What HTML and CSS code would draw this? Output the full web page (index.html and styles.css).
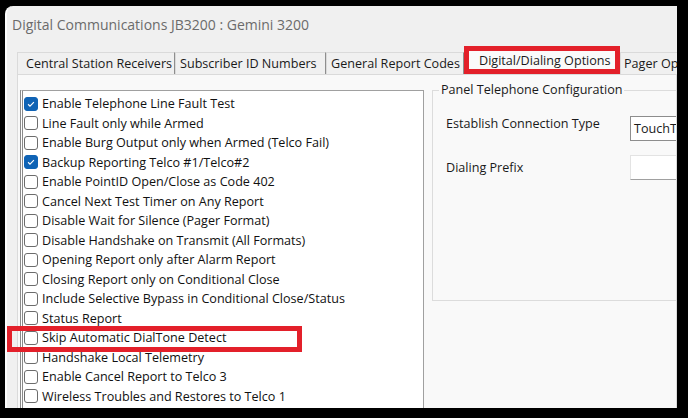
FILE: index.html
```html
<!DOCTYPE html>
<html lang="en">
<head>
    <meta charset="UTF-8">
    <meta name="viewport" content="width=device-width, initial-scale=1.0">
    <title>Digital Communications JB3200 : Gemini 3200</title>
    <link rel="stylesheet" href="styles.css">
</head>
<body>
    <div class="frame">
        <div class="window">
            <div class="titlebar">Digital Communications JB3200 : Gemini 3200</div>

            <div class="tabs">
                <div class="tab receivers">Central Station Receivers</div>
                <div class="tab subscriber">Subscriber ID Numbers</div>
                <div class="tab codes">General Report Codes</div>
                <div class="tab dialing active">Digital/Dialing Options</div>
                <div class="tab pager">Pager Options</div>
            </div>

            <div class="panel">
                <ul class="checklist">
                    <li><span class="box checked"><svg viewBox="0 0 14 14"><path d="M3.6 7.3l2.2 2.2 4.6-4.8"/></svg></span>Enable Telephone Line Fault Test</li>
                    <li><span class="box"></span>Line Fault only while Armed</li>
                    <li><span class="box"></span>Enable Burg Output only when Armed (Telco Fail)</li>
                    <li><span class="box checked"><svg viewBox="0 0 14 14"><path d="M3.6 7.3l2.2 2.2 4.6-4.8"/></svg></span>Backup Reporting Telco #1/Telco#2</li>
                    <li><span class="box"></span>Enable PointID Open/Close as Code 402</li>
                    <li><span class="box"></span>Cancel Next Test Timer on Any Report</li>
                    <li><span class="box"></span>Disable Wait for Silence (Pager Format)</li>
                    <li><span class="box"></span>Disable Handshake on Transmit (All Formats)</li>
                    <li><span class="box"></span>Opening Report only after Alarm Report</li>
                    <li><span class="box"></span>Closing Report only on Conditional Close</li>
                    <li><span class="box"></span>Include Selective Bypass in Conditional Close/Status</li>
                    <li><span class="box"></span>Status Report</li>
                    <li><span class="box"></span>Skip Automatic DialTone Detect</li>
                    <li><span class="box"></span>Handshake Local Telemetry</li>
                    <li><span class="box"></span>Enable Cancel Report to Telco 3</li>
                    <li><span class="box"></span>Wireless Troubles and Restores to Telco 1</li>
                </ul>

                <fieldset class="group">
                    <legend>Panel Telephone Configuration</legend>
                    <div class="fields">
                        <label>Establish Connection Type</label>
                        <div class="combo">TouchTone</div>
                        <label class="mid">Dialing Prefix</label>
                        <div class="textbox"></div>
                    </div>
                </fieldset>
            </div>
        </div>

        <!-- highlight boxes drawn on top of the screenshot -->
        <div class="mark mark-tab"></div>
        <div class="mark mark-row"></div>
    </div>
</body>
</html>
```

FILE: styles.css
```css
body {
    margin: 0;
    background: #000;
    font-family: 'Open Sans', 'Noto Sans', sans-serif;
}

.frame {
    position: relative;
    width: 688px;
    height: 418px;
    padding: 6px 11px 10px 5px;
    box-sizing: border-box;
    background: #000;
    overflow: hidden;
}

.window {
    height: 100%;
    background: #f0f0f0;
    border-left: 2px solid #fdfdfd;
    border-top-left-radius: 8px;
    overflow: hidden;
}

.titlebar {
    height: 38px;
    line-height: 38px;
    padding-left: 5px;
    font-size: 14px;
    color: #6b6b6b;
    white-space: nowrap;
}

.tabs {
    display: flex;
    height: 22px;
    margin-top: 8px;
    padding-left: 10px;
}

.tab {
    flex-shrink: 0;
    height: 22px;
    line-height: 21px;
    padding-left: 4px;
    font-size: 12.6px;
    color: #1a1a1a;
    white-space: nowrap;
    overflow: hidden;
    border: 1px solid #dadada;
    border-bottom: none;
    border-right-color: #8e8e8e;
    box-sizing: border-box;
}

.tab.receivers { width: 158px; padding-left: 8px; }
.tab.subscriber { width: 151px; }
.tab.codes { width: 138px; }
.tab.pager { width: 80px; padding-left: 3px; }

.tab.active {
    width: 156px;
    height: 25px;
    margin-top: -3px;
    padding-left: 14px;
    background: #fafafa;
    border-right-color: #dadada;
    position: relative;
    z-index: 1;
}

.panel {
    display: flex;
    align-items: flex-start;
    gap: 8px;
    height: 340px;
    margin-left: 10px;
    padding: 15px 0 0 2px;
    background: #f9f9f9;
    border: 1px solid #dadada;
    overflow: hidden;
}

.checklist {
    flex-shrink: 0;
    width: 404px;
    height: 330px;
    margin: 0;
    padding: 3px 0 0 1px;
    list-style: none;
    background: #fff;
    border: 1px solid #a0a0a0;
    border-left: 3px double #8a8a8a;
    box-sizing: border-box;
}

.checklist li {
    display: flex;
    align-items: center;
    gap: 4px;
    height: 19.5px;
    font-size: 12.6px;
    color: #111;
    white-space: nowrap;
}

.box {
    width: 14px;
    height: 14px;
    border: 1px solid #6c6c6c;
    border-radius: 3px;
    background: #fff;
    box-sizing: border-box;
    flex-shrink: 0;
}

.box.checked {
    background: #0f63b5;
    border-color: #0f63b5;
}

.box svg {
    display: block;
    width: 12px;
    height: 12px;
}

.box svg path {
    fill: none;
    stroke: #fff;
    stroke-width: 1.3;
}

.group {
    flex-shrink: 0;
    width: 300px;
    height: 219px;
    margin: -8px 0 0 0;
    padding: 18px 0 0 13px;
    border: 1px solid #dcdcdc;
    box-sizing: border-box;
}

.group legend {
    margin-left: -7px;
    padding: 0 2px;
    font-size: 12.6px;
    line-height: 16px;
    color: #1a1a1a;
}

.fields {
    display: grid;
    grid-template-columns: 184px 130px;
    grid-auto-rows: 25px;
    row-gap: 14px;
    font-size: 12.6px;
    color: #1a1a1a;
}

.fields label {
    line-height: 16px;
}

.fields label.mid {
    align-self: center;
}

.combo {
    padding-left: 3px;
    line-height: 23px;
    background: #fff;
    border: 1px solid #8d8d8d;
}

.textbox {
    background: #fff;
    border: 1px solid #e3e3e3;
    border-bottom-color: #a0a0a0;
}

.mark {
    position: absolute;
    z-index: 5;
    border: 5px solid #e3202a;
    box-sizing: border-box;
}

.mark-tab {
    left: 464px;
    top: 46px;
    width: 156px;
    height: 28px;
}

.mark-row {
    left: 7px;
    top: 326px;
    width: 295px;
    height: 26px;
}
```
